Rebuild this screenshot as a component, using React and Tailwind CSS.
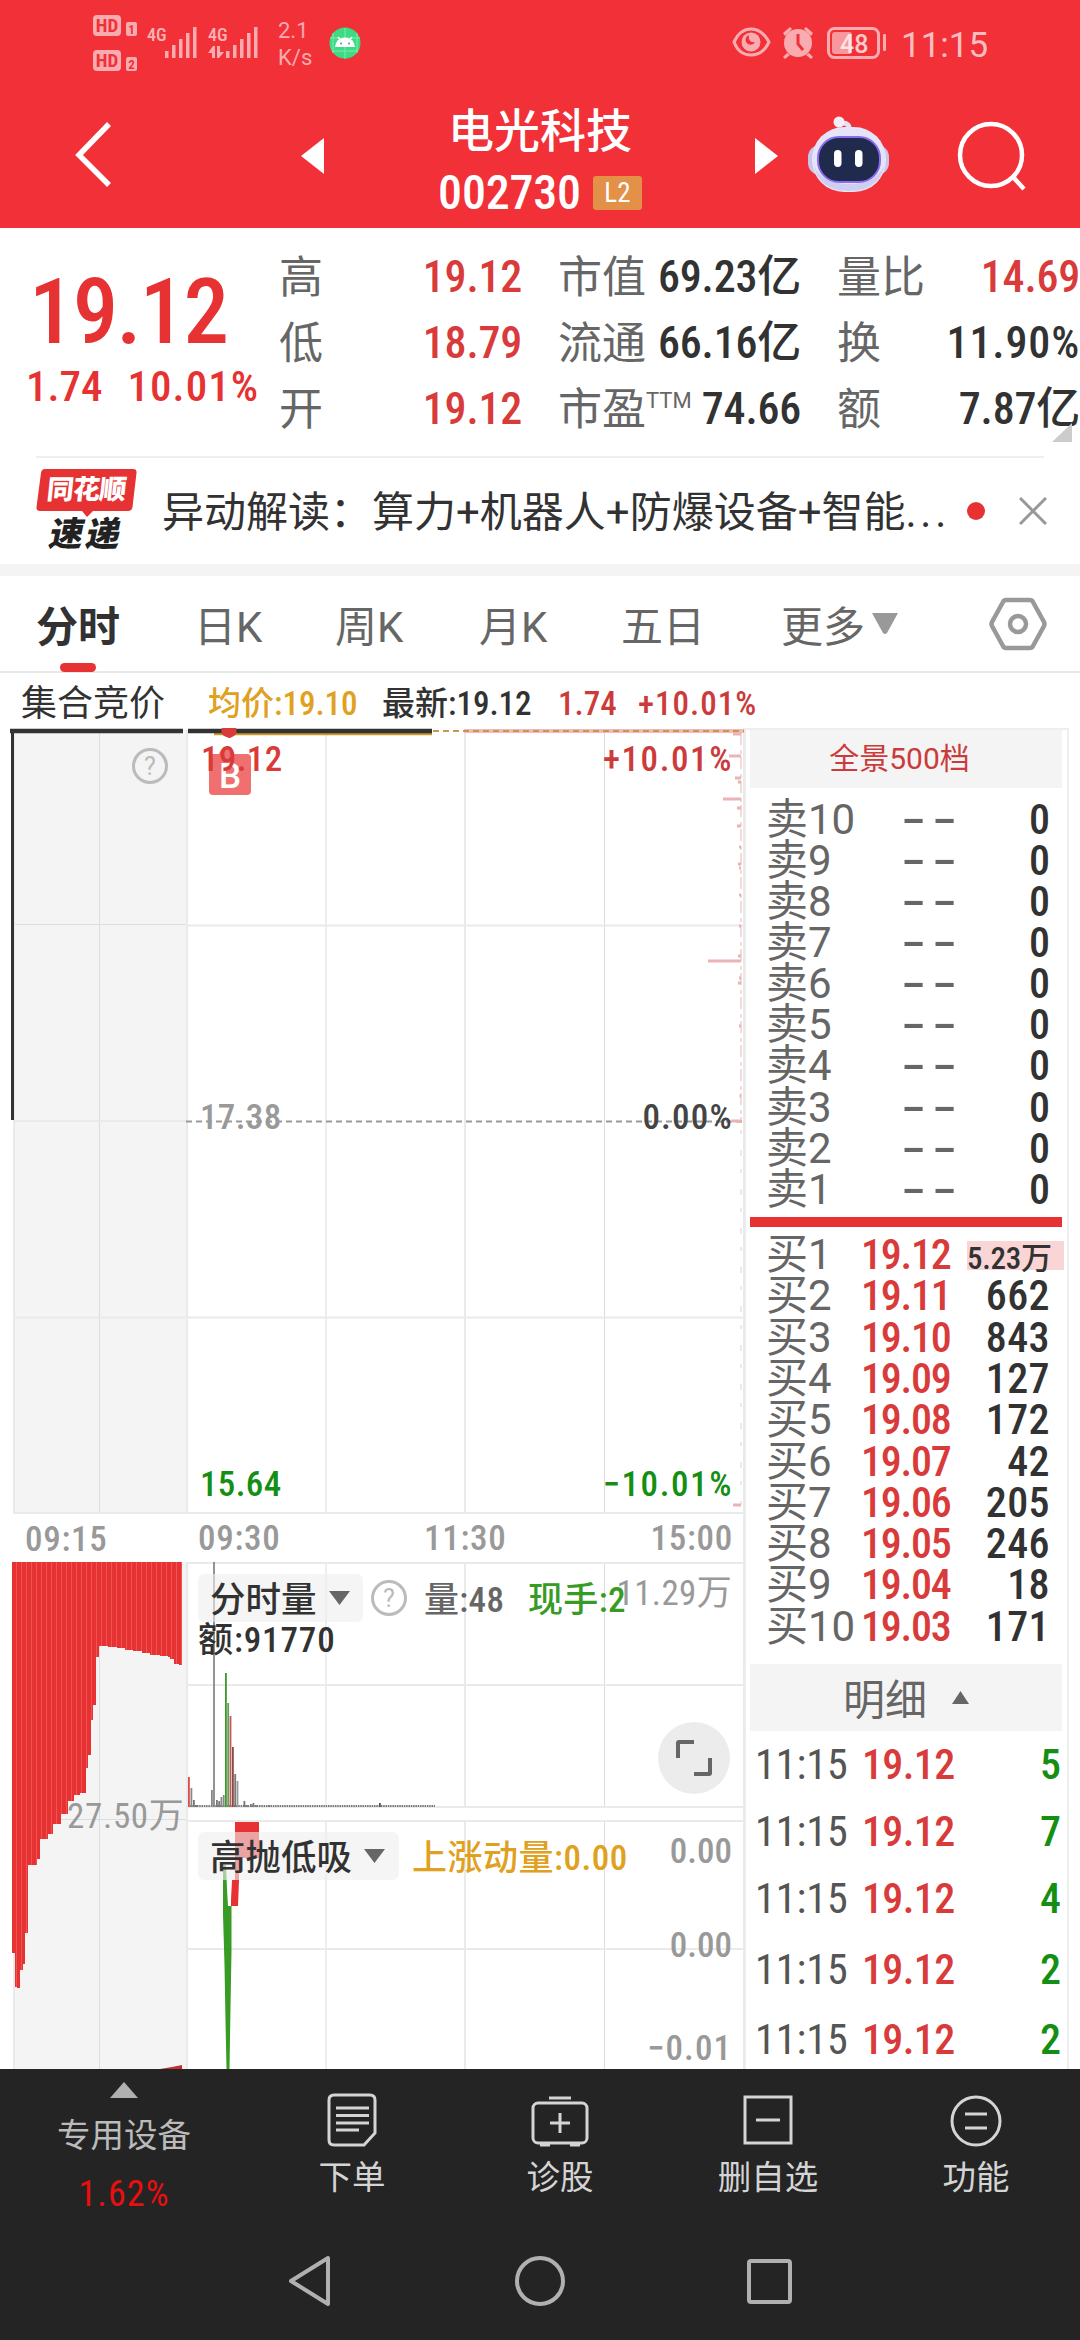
import { Fragment } from 'react';

const stats = [
  [
    { label: '高', value: '19.12', red: true },
    { label: '低', value: '18.79', red: true },
    { label: '开', value: '19.12', red: true },
  ],
  [
    { label: '市值', value: '69.23亿' },
    { label: '流通', value: '66.16亿' },
    { label: '市盈', sup: 'TTM', value: '74.66' },
  ],
  [
    { label: '量比', value: '14.69', red: true },
    { label: '换', value: '11.90%' },
    { label: '额', value: '7.87亿' },
  ],
];

const sells = [10, 9, 8, 7, 6, 5, 4, 3, 2, 1];

const buys = [
  ['19.12', '5.23万'],
  ['19.11', '662'],
  ['19.10', '843'],
  ['19.09', '127'],
  ['19.08', '172'],
  ['19.07', '42'],
  ['19.06', '205'],
  ['19.05', '246'],
  ['19.04', '18'],
  ['19.03', '171'],
];

const trades = [
  { qty: 5, height: 'h-[67px]' },
  { qty: 7, height: 'h-[67px]' },
  { qty: 4, height: 'h-[67px]' },
  { qty: 2, height: 'h-[75px]' },
  { qty: 2, height: 'h-[66px]' },
];

// lower edge of the call auction volume, as [x, y] steps
const auction = [
  [12, 1953], [15, 1987], [17, 1988], [20, 1970], [23, 1964], [25, 1933], [28, 1865], [37, 1859],
  [40, 1839], [48, 1834], [53, 1824], [61, 1814], [68, 1801], [74, 1795], [80, 1793], [86, 1768],
  [88, 1755], [91, 1720], [93, 1705], [96, 1657], [99, 1646], [108, 1647], [117, 1648], [125, 1650],
  [133, 1651], [142, 1653], [150, 1655], [160, 1656], [168, 1657], [170, 1659], [174, 1664], [179, 1665], [182, 1665],
];

const auctionPath = `M12 1562 ${auction
  .map(([x, y], i) => `L${x} ${y}` + (auction[i + 1] ? `H${auction[i + 1][0]}` : ''))
  .join(' ')} V1562Z`;

// minute volume bars: x, top, colour
const volumes = [
  [188, 1777, '#d94a4a'], [190.5, 1788, '#888'], [193, 1800, '#777'], [195.5, 1805, '#777'],
  [211, 1790, '#888'], [216, 1800, '#777'], [218.3, 1801, '#777'], [220.5, 1797, '#888'], [222.8, 1795, '#888'],
  [225, 1673, '#3a9a27'], [227.3, 1703, '#6a9a60'], [229.6, 1716, '#c05a55'], [232, 1747, '#8a4a4a'],
  [234.3, 1774, '#777'], [236.6, 1781, '#999'], [243.5, 1801, '#777'], [246, 1805, '#777'], [250, 1804, '#777'],
  [252.5, 1803, '#777'], [255, 1805, '#777'], [268, 1805, '#777'], [379, 1803, '#555'],
];

// price distribution ticks on the right side: y, width
const ticks = [
  [734, 8], [756, 12], [778, 6], [782, 3], [799, 18], [808, 4], [826, 4], [847, 2], [864, 3], [868, 2],
  [895, 2], [926, 2], [956, 3], [961, 33], [978, 2], [983, 3], [1026, 2], [1096, 1.5], [1121, 10], [1505, 8],
];

function StatusBar() {
  return (
    <div className="h-[85px] text-white/60">
      <svg width="1080" height="85" viewBox="0 0 1080 85" fill="none">
        <g fill="#fff" fillOpacity=".6">
          <rect x="93" y="15" width="28" height="21" rx="4" />
          <rect x="93" y="50" width="28" height="21" rx="4" />
          <rect x="126" y="22" width="11" height="14" rx="2" />
          <rect x="126" y="57" width="11" height="14" rx="2" />
          <path d="M165 51h3.500v7h-3.500zM172 45h3.500v13h-3.500zM179 39h3.500v19h-3.500zM186 33h3.500v25h-3.500zM193 27h3.500v31h-3.500z" />
          <path d="M226 51h3.500v7h-3.500zM233 45h3.500v13h-3.500zM240 39h3.500v19h-3.500zM247 33h3.500v25h-3.500zM254 27h3.500v31h-3.500z" />
          <path d="M208 53l5-7h2v12h-3v-5zM217 46h3v6h4l-5 6h-2z" />
          <rect x="883" y="34" width="3" height="17" rx="1" />
          <rect x="832" y="32" width="20" height="22" rx="3" fillOpacity=".5" />
          <circle cx="798" cy="43" r="14" />
          <path d="M783 33l7-6 2 2-7 7zM813 33l-7-6-2 2 7 7zM787 53l-4 4 2 2 5-4zM809 53l4 4-2 2-5-4z" />
          <circle cx="751" cy="42" r="9.500" />
        </g>
        <path d="M798 34v10l5 6" stroke="#f13038" strokeWidth="3" />
        <path d="M749 35a5 5 0 1 0 6 7c-4 1-7-2-6-7z" fill="#f13038" />
        <path d="M734 42q6-13 17-13t18 13q-6 13-18 13t-17-13z" stroke="#fff" strokeOpacity=".6" strokeWidth="3" />
        <rect x="828.500" y="28.500" width="50" height="29" rx="6" stroke="#fff" strokeOpacity=".6" strokeWidth="3" />
        <g fontFamily="Roboto Condensed" fontWeight="700" fill="#f13038" textAnchor="middle">
          <text x="107" y="32" fontSize="19">HD</text>
          <text x="107" y="67" fontSize="19">HD</text>
          <text x="131.500" y="33.500" fontSize="13">1</text>
          <text x="131.500" y="68.500" fontSize="13">2</text>
        </g>
        <g fontFamily="Roboto Condensed" fill="#fff" fillOpacity=".65">
          <text x="147" y="41" fontSize="18" fontWeight="500">4G</text>
          <text x="208" y="41" fontSize="18" fontWeight="500">4G</text>
        </g>
        <g fontFamily="Roboto" fill="#fff" fillOpacity=".6">
          <text x="278" y="38" fontSize="22">2.1</text>
          <text x="278" y="65" fontSize="22">K/s</text>
          <text x="901" y="57" fontSize="35" fillOpacity=".7">11:15</text>
          <text x="840" y="52.500" fontSize="25" fontWeight="500" fillOpacity=".75">48</text>
        </g>
        <circle cx="345" cy="43" r="15.500" fill="#3ddc84" />
        <path d="M345 28v31M333 33v20M357 33v20M330 38h30M332 51h26" stroke="#7fe9b0" strokeWidth="1" />
        <path d="M335 47a10 9.500 0 0 1 20 0z" fill="#fff" />
        <path d="M338 37l3 4M352 37l-3 4" stroke="#fff" strokeWidth="1.500" />
        <circle cx="341" cy="43.500" r="1" fill="#3a7" />
        <circle cx="349" cy="43.500" r="1" fill="#3a7" />
      </svg>
    </div>
  );
}

function Robot() {
  return (
    <svg width="84" height="80" viewBox="805 115 84 80">
      <path d="M848 131c1-6-2-8-7-8" stroke="#e3e0f5" strokeWidth="5" fill="none" />
      <circle cx="838" cy="122" r="5.500" fill="#f1effb" />
      <rect x="807" y="145" width="81" height="30" rx="12" fill="#c9c6ee" />
      <rect x="811" y="127" width="74" height="65" rx="32" fill="#e6e4f8" />
      <path d="M813 166q6 25 35 25t35-25q-8 18-35 18t-35-18z" fill="#cfcdf0" />
      <rect x="817" y="137" width="62" height="45" rx="21" fill="#1f2a4d" stroke="#8a6cf0" strokeWidth="2" />
      <rect x="833" y="150" width="7.500" height="17" rx="3.700" fill="#fff" />
      <rect x="854" y="150" width="7.500" height="17" rx="3.700" fill="#fff" />
    </svg>
  );
}

function Header() {
  return (
    <header className="h-[228px] bg-[#f13038] text-white">
      <StatusBar />
      <div className="flex items-start h-[143px]">
        <svg className="ml-[70px] mt-[33px]" width="44" height="74" viewBox="70 118 44 74" fill="none">
          <path d="M109 124L79 155l30 30" stroke="#fff" strokeWidth="5.500" />
        </svg>
        <svg className="ml-[186px] mt-[51px]" width="26" height="40" viewBox="0 0 26 40">
          <path d="M24 2v36L1 20z" fill="#fff" />
        </svg>
        <div className="w-[428px] flex flex-col items-center">
          <div className="mt-[23px] text-[46px] leading-none font-medium">电光科技</div>
          <div className="mt-[15px] flex items-center gap-[12px]">
            <span className="text-[48px] leading-none font-medium tracking-[-0.2px]">002730</span>
            <span className="w-[49px] h-[34px] rounded-[3px] bg-[#e39048] text-[27px] flex items-center justify-center">L2</span>
          </div>
        </div>
        <svg className="mt-[51px]" width="26" height="40" viewBox="0 0 26 40">
          <path d="M1 2v36l23-18z" fill="#fff" />
        </svg>
        <div className="ml-[26px] mt-[30px]"><Robot /></div>
        <svg className="ml-[65px] mt-[33px]" width="76" height="76" viewBox="954 118 76 76" fill="none" stroke="#fff" strokeWidth="4.500">
          <circle cx="990" cy="155" r="31" />
          <path d="M1012 177l11 12" />
        </svg>
      </div>
    </header>
  );
}

function Quote() {
  return (
    <section className="relative h-[228px] flex font-medium">
      <div className="w-[280px] text-[#e63232] pt-[39px]">
        <div className="pl-[29px] text-[91px] leading-none tracking-[-0.02em]">19.12</div>
        <div className="pl-[26px] mt-[7px] flex gap-[25px] text-[43px] leading-none">
          <span>1.74</span>
          <span className="tracking-[0.025em]">10.01%</span>
        </div>
      </div>
      <div className="flex gap-[36px] pt-[15px]">
        {stats.map((col, i) => (
          <div key={i} className="w-[243px]">
            {col.map((s) => (
              <div key={s.label} className="h-[66px] flex items-center justify-between text-[44px] leading-none">
                <span className="flex font-normal text-[#666] pt-[3px]">
                  {s.label}
                  {s.sup && <sup className="top-0 font-['Roboto'] text-[22px] leading-[26px]">{s.sup}</sup>}
                </span>
                <span className={`whitespace-nowrap pt-[1px] ${s.red ? 'text-[#d93a3a]' : 'text-[#323232]'} ${s.value.includes('%') ? 'tracking-[0.02em]' : 'tracking-[-0.005em]'}`}>{s.value}</span>
              </div>
            ))}
          </div>
        ))}
      </div>
      <svg className="absolute right-[8px] top-[195px]" width="20" height="19" viewBox="0 0 20 19">
        <path d="M20 0v19H0z" fill="#ccc" />
      </svg>
    </section>
  );
}

function News() {
  return (
    <section className="h-[120px] flex items-center">
      <div className="h-[108px] w-[1008px] mx-[36px] mb-[12px] border-t-2 border-[#eee] flex items-center">
        <div className="relative w-[101px] h-[84px] -mt-[2px] shrink-0 flex flex-col items-center">
          <svg className="absolute left-0 top-0" width="101" height="50" viewBox="0 0 101 50">
            <path d="M9 1h88q4 0 3.500 4l-4 34q-.5 4-4.500 4H57l-6 6-5-6H4q-4 0-3.500-4L5 5q.5-4 4-4z" fill="#e63232" />
          </svg>
          <span className="relative mt-[9px] text-[27px] leading-[27px] font-black text-white -skew-x-6 tracking-[-0.03em]">同花顺</span>
          <span className="relative mt-[14px] text-[34px] leading-[33px] font-black text-[#222] -skew-x-12 tracking-[0.08em]">速递</span>
        </div>
        <span className="ml-[25px] w-[796px] shrink-0 pt-[3px] text-[42px] leading-none text-[#323232] whitespace-nowrap font-['Roboto','Noto_Sans_CJK_SC',sans-serif]">
          异动解读：算力+机器人+防爆设备+智能<span className="tracking-[0.09em]">...</span>
        </span>
        <span className="ml-[9px] size-[18px] shrink-0 rounded-full bg-[#e63232]" />
        <svg className="ml-[34px] shrink-0" width="28" height="28" viewBox="0 0 28 28">
          <path d="M1 1l26 26M27 1L1 27" stroke="#999" strokeWidth="3" />
        </svg>
      </div>
    </section>
  );
}

function Tabs() {
  return (
    <nav className="h-[109px] border-t-[12px] border-t-[#f4f4f4] border-b-2 border-b-[#e8e8e8] flex items-start text-[42px] leading-[42px] text-[#666] font-['Roboto','Noto_Sans_CJK_SC',sans-serif]">
      <div className="ml-[36px] w-[158px] pt-[31px] font-bold text-[#323232]">
        分时
        <div className="ml-[24px] mt-[14px] w-[36px] h-[9px] rounded-full bg-[#e63232]" />
      </div>
      <span className="w-[141px] pt-[31px]">日K</span>
      <span className="w-[144px] pt-[31px]">周K</span>
      <span className="w-[142px] pt-[31px]">月K</span>
      <span className="w-[160px] pt-[31px]">五日</span>
      <span className="w-[208px] pt-[31px] flex gap-[7px]">
        更多
        <svg className="mt-[6px]" width="26" height="21" viewBox="0 0 26 21">
          <path d="M0 0h26L15 20q-2 2-4 0z" fill="#999" />
        </svg>
      </span>
      <svg className="mt-[20px]" width="58" height="56" viewBox="0 0 58 56" fill="none" stroke="#999" strokeWidth="4.500">
        <path d="M17 4h24q2 0 3 2l11 20q1 2 0 4L44 50q-1 2-3 2H17q-2 0-3-2L3 30q-1-2 0-4L14 6q1-2 3-2z" />
        <circle cx="29" cy="28" r="8" />
      </svg>
    </nav>
  );
}

function InfoRow() {
  return (
    <div className="h-[55px] pt-[14px] flex text-[36px] leading-[34px] font-medium text-[#323232]">
      <span className="ml-[21px] w-[187px] font-normal">集合竞价</span>
      <span className="w-[174px] text-[33px] text-[#e0a020]">均价:19.10</span>
      <span className="w-[176px] text-[33px]">最新:19.12</span>
      <span className="w-[80px] text-[33px] text-[#cc3b3b]">1.74</span>
      <span className="text-[33px] tracking-[0.03em] text-[#cc3b3b]">+10.01%</span>
    </div>
  );
}

function Question({ className }) {
  return (
    <span className={`absolute size-[36px] rounded-full border-[3px] border-[#bbb] text-[#bbb] text-[25px] leading-none flex items-center justify-center font-['Roboto'] font-normal ${className}`}>
      ?
    </span>
  );
}

function ChartDrawing() {
  return (
    <svg className="absolute left-0 top-0" width="745" height="1341" viewBox="0 728 745 1341" fill="none">
      <rect x="13" y="730" width="175" height="784" fill="#f4f4f4" />
      <rect x="13" y="1562" width="175" height="507" fill="#f4f4f4" />
      <g stroke="#ddd">
        <path d="M99.500 730v784M99.500 1562v507M326 730v784M326 1562v245M326 1821v248M604.500 730v784M604.500 1562v245M604.500 1821v248" />
        <path d="M13 924.500h173M61 1819.500h126" />
      </g>
      <g stroke="#eaeaea" strokeWidth="2">
        <path d="M14 730v784M14 1562v507M187 730v784M187 1562v507M465 730v784M465 1562v245M465 1821v248M744 728v1341" />
        <path d="M186 925.500h558M13 1121h173M13 1317.500h731M13 1513h731M187 1563h557M187 1685h557M187 1807h557M187 1821h557M187 1949h557" />
      </g>
      <path d="M186 1121.500h558" stroke="#999" strokeWidth="2" strokeDasharray="6 4" />

      {/* limit-up line */}
      <path d="M464 731h280" stroke="#f6b9b9" strokeWidth="4" />
      <path d="M433 731h311" stroke="#c09a55" strokeWidth="2" strokeDasharray="6 4" />
      <path d="M214 734h218" stroke="#c99a2e" strokeWidth="2.500" />
      <path d="M188 731h244M10 731h173" stroke="#323232" strokeWidth="4.500" />
      <path d="M12.500 730v390" stroke="#323232" strokeWidth="3" />
      <path d="M222 728h14q2 5-2 8l-4 2h-1l-5-2q-4-3-2-8z" fill="#d93a3a" />

      <path d="M741 733v390" stroke="#e9b4b4" strokeWidth="1" strokeDasharray="12 5 4 3" />
      <path d="M741 1130v375" stroke="#eccaca" strokeWidth="1" strokeDasharray="4 16 6 13" />
      {ticks.map(([y, w]) => (
        <rect key={y} x={741 - w} y={y - 1.5} width={w} height="3" fill="#ebb3b3" />
      ))}

      {/* call auction volume */}
      <path d={auctionPath} fill="#e63232" />
      {Array.from({ length: 34 }, (_, i) => (
        <path key={i} d={`M${16.5 + i * 5} 1562V${(auction.filter((p) => p[0] <= 16.5 + i * 5).pop() || [0, 1953])[1]}`} stroke="#f25c58" strokeWidth=".8" />
      ))}
      <path d="M160 2069l12-2 10-2v4z" fill="#c03030" />

      {/* minute volume */}
      <path d="M190 1806h245" stroke="#777" strokeWidth="2" strokeDasharray="1.500 .8" />
      <path d="M214 1562v245" stroke="#888" strokeWidth="1.800" />
      {volumes.map(([x, y, c]) => (
        <rect key={x} x={x} y={y} width="1.800" height={1807 - y} fill={c} />
      ))}

      {/* momentum */}
      <path d="M235 1822h24v36h-20v22l-1 26h-7v-6l1-20h3z" fill="#e63232" />
      <path d="M223 1865h3l1 24 1 17h3.500v45l-1 56-1 62h-3l-1-48-1-56-1.500-50z" fill="#379b24" />
    </svg>
  );
}

function Chip({ children, className }) {
  return (
    <div className={`absolute left-[198px] h-[48px] rounded-[6px] bg-[#eee]/60 pl-[12px] flex items-center gap-[12px] text-[35.500px] text-[#323232] ${className}`}>
      <span className="pt-[5px]">{children}</span>
      <svg width="21" height="14" viewBox="0 0 21 14">
        <path d="M0 0h21L10.500 14z" fill="#666" />
      </svg>
    </div>
  );
}

function Charts() {
  return (
    <div className="relative w-[744px] h-[1341px] shrink-0 text-[35px] leading-none font-medium text-[#999]">
      <ChartDrawing />
      <Question className="left-[132px] top-[20px]" />
      <span className="absolute left-[209px] top-[26px] w-[42px] h-[41px] rounded-[4px] bg-[#f07070] text-white text-[35px] flex items-center justify-center pt-[3px] font-['Roboto']">B</span>
      <span className="absolute left-[219px] top-[20px] size-[15px] rounded-full bg-[#f07070]" />
      <span className="absolute left-[201px] top-[14px] tracking-[0.01em] text-[#d93a3a]">19.12</span>
      <span className="absolute right-[11px] top-[14px] tracking-[0.045em] text-[#cc3b3b]">+10.01%</span>
      <span className="absolute left-[200px] top-[372px] tracking-[0.01em]">17.38</span>
      <span className="absolute right-[11px] top-[372px] tracking-[0.035em] text-[#444]">0.00%</span>
      <span className="absolute left-[200px] top-[739px] tracking-[0.01em] text-[#148f14]">15.64</span>
      <span className="absolute right-[11px] top-[739px] tracking-[0.045em] text-[#148f14]">−10.01%</span>

      <span className="absolute left-[25px] top-[794px] tracking-[0.02em]">09:15</span>
      <span className="absolute left-[198px] top-[793px] tracking-[0.02em]">09:30</span>
      <span className="absolute left-[424px] top-[793px] tracking-[0.02em]">11:30</span>
      <span className="absolute right-[11px] top-[793px] tracking-[0.02em]">15:00</span>

      <Chip className="top-[846px] w-[165px]">分时量</Chip>
      <Question className="left-[371px] top-[852px]" />
      <span className="absolute left-[424px] top-[855px] tracking-[0.01em] text-[#666]">量:48</span>
      <span className="absolute right-[12px] top-[848px] font-normal tracking-[0.01em]">11.29万</span>
      <span className="absolute left-[528px] top-[855px] tracking-[0.01em] text-[#379b24]">现手:2</span>
      <span className="absolute left-[198px] top-[895px] tracking-[0.025em] text-[#323232]">额:91770</span>
      <span className="absolute left-[658px] top-[994px] size-[72px] rounded-full bg-[#ececec] flex items-center justify-center">
        <svg width="38" height="38" viewBox="0 0 38 38" fill="none" stroke="#666" strokeWidth="4">
          <path d="M3 19V4q0-1 1-1h15M35 19v15q0 1-1 1H19" />
        </svg>
      </span>
      <span className="absolute left-[67px] top-[1071px] font-normal tracking-[0.02em]">27.50万</span>

      <Chip className="top-[1104px] w-[201px]">高抛低吸</Chip>
      <span className="absolute left-[412px] top-[1113px] tracking-[0.015em] text-[#e0a020]">上涨动量:0.00</span>
      <span className="absolute right-[12px] top-[1106px]">0.00</span>
      <span className="absolute right-[12px] top-[1200px]">0.00</span>
      <span className="absolute right-[12px] top-[1303px] tracking-[0.03em]">−0.01</span>
    </div>
  );
}

function OrderBook() {
  return (
    <aside className="w-[325px] h-[1341px] border-x-2 border-t-2 border-[#eee] pl-[4px] pr-[5px] overflow-hidden leading-none">
      <div className="h-[58px] bg-[#f4f4f4] flex items-center justify-center text-[30px] text-[#cc3b3b] pr-[13px] font-['Roboto','Noto_Sans_CJK_SC',sans-serif]">
        全景500档
      </div>
      <div className="pt-[11px]">
        {sells.map((n) => (
          <div key={n} className="h-[41.150px] flex items-center text-[42px]">
            <span className="pl-[16px] w-[151px] text-[#666] font-['Roboto','Noto_Sans_CJK_SC',sans-serif]">卖{n}</span>
            <span className="w-[60px] text-[#666] font-medium tracking-[0.07em] origin-left scale-x-[1.95]">--</span>
            <span className="flex-1 text-right pr-[12px] font-medium text-[#323232]">0</span>
          </div>
        ))}
      </div>
      <div className="mt-[7px] mb-[7px] h-[10px] bg-[#e63232]" />
      {buys.map(([price, qty], i) => (
        <div key={price} className="h-[41.300px] flex items-center text-[42px] font-medium">
          <span className="pl-[16px] w-[111px] shrink-0 text-[#666] font-normal font-['Roboto','Noto_Sans_CJK_SC',sans-serif]">买{i + 1}</span>
          <span className="w-[106px] shrink-0 tracking-[-0.03em] text-[#d93a3a]">{price}</span>
          {i === 0 ? (
            <span className="flex-1 h-[29px] bg-[#f9d5d5] text-[31px] tracking-[-0.01em] text-[#323232] whitespace-nowrap flex items-center justify-end pr-[12px] pt-[6px]">{qty}</span>
          ) : (
            <span className="flex-1 text-right pr-[12px] tracking-[0.01em] text-[#323232]">{qty}</span>
          )}
        </div>
      ))}
      <div className="mt-[17px] h-[67px] bg-[#f4f4f4] flex items-center justify-center gap-[25px] text-[42px] text-[#666]">
        <span className="pt-[6px]">明细</span>
        <svg width="17" height="13" viewBox="0 0 17 13">
          <path d="M8.500 0L17 13H0z" fill="#666" />
        </svg>
      </div>
      {trades.map((t, i) => (
        <div key={i} className={`${t.height} flex items-center text-[42px] font-medium`}>
          <span className="pl-[5px] w-[112px] font-normal text-[#555]">11:15</span>
          <span className="w-[106px] tracking-[-0.015em] text-[#d93a3a]">19.12</span>
          <span className="flex-1 text-right pr-[1px] text-[#148f14]">{t.qty}</span>
        </div>
      ))}
    </aside>
  );
}

const actions = [
  {
    label: '下单',
    icon: (
      <Fragment>
        <path d="M12 7h36q5 0 5 5v33L42 57H12q-5 0-5-5V12q0-5 5-5z" />
        <path d="M14 20h33M14 27.500h33M14 35h33M14 42h23" />
      </Fragment>
    ),
  },
  {
    label: '诊股',
    icon: (
      <Fragment>
        <rect x="3" y="15" width="54" height="40" rx="5" />
        <path d="M19 10h22M10 57h10M40 57h10M30 25v20M20 35h20" />
      </Fragment>
    ),
  },
  {
    label: '删自选',
    icon: (
      <Fragment>
        <rect x="7" y="9" width="46" height="46" />
        <path d="M18 32h24" />
      </Fragment>
    ),
  },
  {
    label: '功能',
    icon: (
      <Fragment>
        <circle cx="30" cy="33" r="24" />
        <path d="M19 26h22M19 40h22" />
      </Fragment>
    ),
  },
];

function BottomBar() {
  return (
    <footer className="h-[271px] bg-[#242424] leading-none">
      <div className="h-[171px] flex">
        <div className="w-[248px] pt-[13px] flex flex-col items-center text-[33.500px] text-[#bbb]">
          <svg width="28" height="16" viewBox="0 0 28 16">
            <path d="M14 0l14 16H0z" fill="#b0b0b0" />
          </svg>
          <span className="mt-[21px]">专用设备</span>
          <span className="mt-[23px] text-[36px] tracking-[0.03em] text-[#e80f0f]">1.62%</span>
        </div>
        {actions.map((a) => (
          <div key={a.label} className="w-[208px] pt-[19px] flex flex-col items-center text-[33.500px] text-[#d4d4d4]">
            <svg width="60" height="62" viewBox="0 0 60 62" fill="none" stroke="#d4d4d4" strokeWidth="3">{a.icon}</svg>
            <span className="mt-[11px]">{a.label}</span>
          </div>
        ))}
      </div>
      <div className="h-[82px] flex justify-center items-center gap-[180px]">
        <svg width="50" height="56" viewBox="0 0 50 56" fill="none" stroke="#b0b0b0" strokeWidth="4" strokeLinejoin="round">
          <path d="M43 5v46L6 28z" />
        </svg>
        <svg width="50" height="56" viewBox="0 0 50 56" fill="none" stroke="#b0b0b0" strokeWidth="4">
          <circle cx="25" cy="28" r="23" />
        </svg>
        <svg width="50" height="56" viewBox="0 0 50 56" fill="none" stroke="#b0b0b0" strokeWidth="4">
          <rect x="4" y="8" width="41" height="41" rx="2" />
        </svg>
      </div>
    </footer>
  );
}

export default function App() {
  return (
    <div className="w-[1080px] h-[2340px] overflow-hidden bg-white font-['Roboto_Condensed','Noto_Sans_CJK_SC',sans-serif]">
      <Header />
      <Quote />
      <News />
      <div className="-mt-[12px]">
        <Tabs />
      </div>
      <InfoRow />
      <main className="flex">
        <Charts />
        <OrderBook />
      </main>
      <BottomBar />
    </div>
  );
}
